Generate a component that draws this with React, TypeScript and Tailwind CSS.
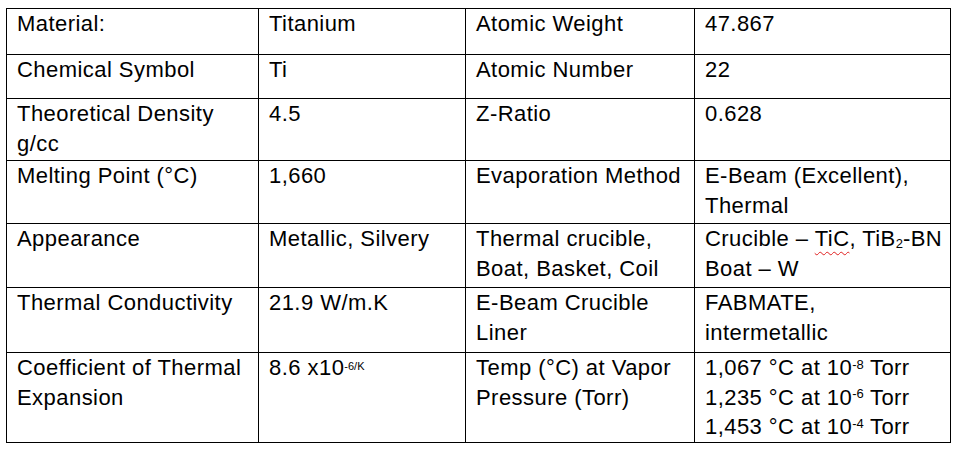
import { ReactNode } from "react"

interface RowProps {
    height: number
    cells: ReactNode[]
}

const Sup = ({ children, small }: { children: ReactNode, small?: boolean }) => (
    <sup className={small ? "text-[11px] tracking-normal" : "text-[13px] tracking-normal"}>{children}</sup>
)

const rows: RowProps[] = [
    { height: 46, cells: ["Material:", "Titanium", "Atomic Weight", "47.867"] },
    { height: 44, cells: ["Chemical Symbol", "Ti", "Atomic Number", "22"] },
    { height: 62, cells: [<>Theoretical Density<br />g/cc</>, "4.5", "Z-Ratio", "0.628"] },
    { height: 63, cells: ["Melting Point (°C)", "1,660", "Evaporation Method", <>E-Beam (Excellent),<br />Thermal</>] },
    {
        height: 64,
        cells: [
            "Appearance",
            "Metallic, Silvery",
            <>Thermal crucible,<br />Boat, Basket, Coil</>,
            <>
                Crucible – <span className="underline decoration-wavy decoration-[#e02020] decoration-1 underline-offset-[5px]">TiC</span>, TiB<sub className="text-[13px] tracking-normal -top-[-0.15em]">2</sub>-BN
                <br />Boat – W
            </>,
        ],
    },
    { height: 65, cells: ["Thermal Conductivity", "21.9 W/m.K", <>E-Beam Crucible<br />Liner</>, <>FABMATE,<br />intermetallic</>] },
    {
        height: 90,
        cells: [
            <>Coefficient of Thermal<br />Expansion</>,
            <>8.6 x10<Sup small>-6/K</Sup></>,
            <>Temp (°C) at Vapor<br />Pressure (Torr)</>,
            <>
                1,067 °C at 10<Sup>-8</Sup> Torr<br />
                1,235 °C at 10<Sup>-6</Sup> Torr<br />
                1,453 °C at 10<Sup>-4</Sup> Torr
            </>,
        ],
    },
]

export default function App() {
    return (
        <div className="w-[961px] h-[451px] bg-white pt-[8px] pl-[6px] font-['Liberation_Sans',Arial,sans-serif] text-[22px] leading-[29.5px] tracking-[0.45px] text-black">
            <div className="grid grid-cols-[252px_207px_229px_256px] w-[945px] border-l border-t border-black">
                {rows.map((row, r) =>
                    row.cells.map((cell, c) => (
                        <div
                            key={r + "-" + c}
                            className="border-r border-b border-black pl-[10px] pt-0 whitespace-nowrap overflow-hidden"
                            style={{ height: row.height }}
                        >
                            {cell}
                        </div>
                    ))
                )}
            </div>
        </div>
    )
}
